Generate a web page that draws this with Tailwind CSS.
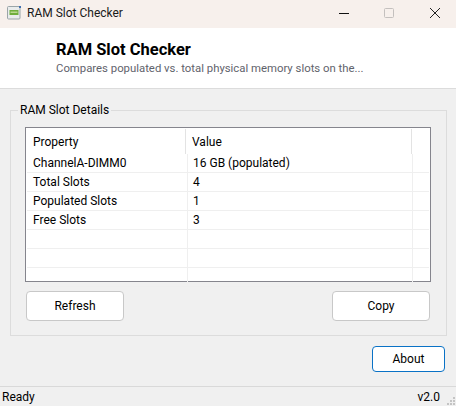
<!DOCTYPE html>
<html><head><meta charset="utf-8">
<script src="https://cdn.jsdelivr.net/npm/@tailwindcss/browser@4"></script>
</head>
<body class="w-[456px] h-[406px] overflow-hidden bg-[#f0f0f0] text-[12px] leading-[16px] text-black font-['Roboto','Open_Sans',sans-serif]">
<div class="flex flex-col h-[406px]">
  <div class="h-[28px] bg-[#f7f0ec] flex items-center pb-[3px] shrink-0">
    <svg class="ml-[7px] w-[14px] h-[14px]" viewBox="0 0 14 14"><rect x="0.5" y="0.5" width="12.5" height="12.5" rx="1" fill="#e9ecec" stroke="#9aa5a8"/><rect x="2.5" y="4" width="9" height="5" fill="#6fae3c"/><rect x="3.5" y="5.5" width="7" height="1.5" fill="#b9d88e"/><rect x="12" y="0" width="2" height="2" fill="#3f6fb0"/></svg>
    <span class="ml-[6px] text-[12px] text-[#1a1a1a]">RAM Slot Checker</span>
    <div class="ml-auto flex items-center">
      <svg class="w-[12px] h-[12px] mr-[33px]" viewBox="0 0 12 12"><path d="M1 6.5H11" stroke="#111" stroke-width="1"/></svg>
      <svg class="w-[12px] h-[12px] mr-[34px]" viewBox="0 0 12 12"><rect x="1.5" y="1.5" width="9" height="9" rx="1" fill="none" stroke="#c4c0be"/></svg>
      <svg class="w-[12px] h-[12px] mr-[15px]" viewBox="0 0 12 12"><path d="M1 1L11 11M11 1L1 11" stroke="#222" stroke-width="1"/></svg>
    </div>
  </div>
  <div class="h-[61px] bg-white border-b border-[#dcdcdc] pl-[56px] pt-[12px] shrink-0">
    <div class="text-[16.5px] leading-[20px] font-bold">RAM Slot Checker</div>
    <div class="text-[11.35px] text-[#5f636c] leading-[17px]">Compares populated vs. total physical memory slots on the...</div>
  </div>
  <div class="flex-1 flex flex-col pl-[10px] pr-[11px]">
    <fieldset class="mt-[13px] h-[234px] border border-[#dcdcdc] px-[15px] pb-[14px]">
      <legend class="-ml-[8px] px-[2px] leading-[16px]">RAM Slot Details</legend>
      <div class="mt-[9px] w-[406px] h-[155px] -ml-[1px] border border-[#85858d] bg-white p-[1px]">
        <div class="flex h-[25px] items-center">
          <div class="w-[159px] h-full flex items-center pl-[6px] border-r border-[#e3e3e3]">Property</div>
          <div class="w-[226px] h-full flex items-center pl-[6px] border-r border-[#e3e3e3]">Value</div>
        </div>
        <div class="grid grid-cols-[161px_225px_1fr] auto-rows-[19px] [&>div]:border-b [&>div]:border-[#efefef] [&>div:nth-child(3n+1)]:border-r [&>div:nth-child(3n+2)]:border-r [&>div]:border-r-[#efefef] [&>div]:pl-[6px] [&>div:nth-child(3n+2)]:pl-[5px] [&>div]:leading-[18px]">
          <div>ChannelA-DIMM0</div><div>16 GB (populated)</div><div></div>
          <div>Total Slots</div><div>4</div><div></div>
          <div>Populated Slots</div><div>1</div><div></div>
          <div>Free Slots</div><div>3</div><div></div>
          <div></div><div></div><div></div>
          <div></div><div></div><div></div>
          <div></div><div></div><div></div>
        </div>
      </div>
      <div class="mt-[9px] flex justify-between pr-[1px]">
        <button class="w-[98px] h-[30px] bg-white border border-[#c8c8c8] rounded-[4px] text-[12px]">Refresh</button>
        <button class="w-[98px] h-[30px] bg-white border border-[#c8c8c8] rounded-[4px] text-[12px]">Copy</button>
      </div>
    </fieldset>
    <div class="mt-[10px] flex justify-end">
      <button class="w-[73px] h-[26px] bg-white border border-[#0a72c6] rounded-[4px] text-[12px]">About</button>
    </div>
  </div>
  <div class="h-[20px] border-t border-[#d9d9d9] flex items-center justify-between pl-[2px] pr-[16px] pt-[1px] shrink-0 relative">
    <span>Ready</span><span>v2.0</span>
    <svg class="absolute right-0 bottom-0 w-[11px] h-[11px]" viewBox="0 0 11 11" fill="#c4c4c4"><rect x="8" y="2" width="2" height="2"/><rect x="5" y="5" width="2" height="2"/><rect x="8" y="5" width="2" height="2"/><rect x="2" y="8" width="2" height="2"/><rect x="5" y="8" width="2" height="2"/><rect x="8" y="8" width="2" height="2"/></svg>
  </div>
</div>
</body></html>
